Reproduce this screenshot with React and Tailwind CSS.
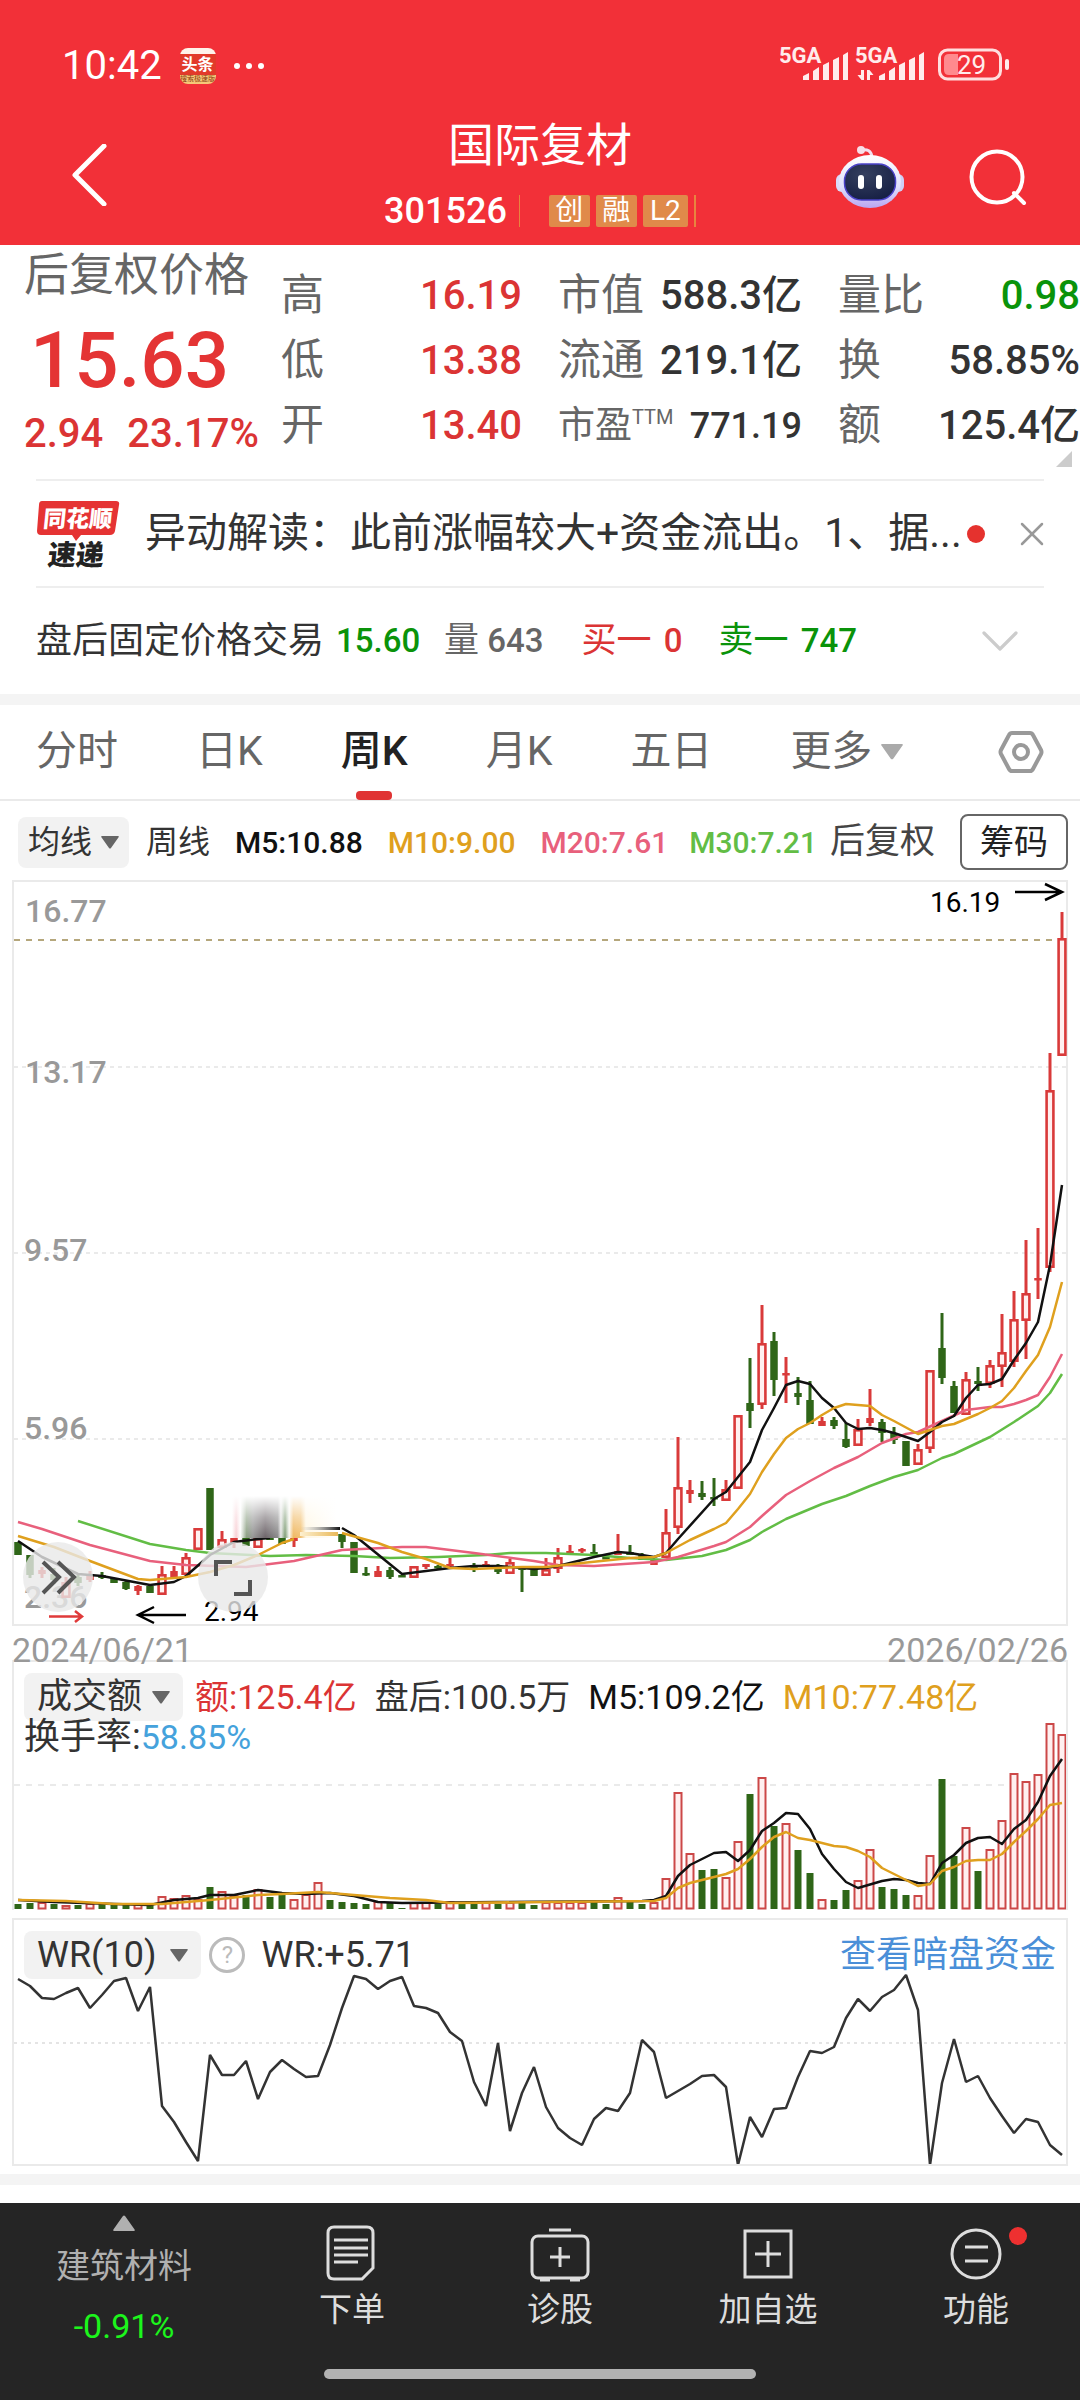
import { X, ChevronDown } from "lucide-react";

const RED = "#d93a3a";
const GREEN = "#2f6618";

// [up, high, bodyTop, bodyBottom, low, volumeTop]
const bars = [
  [0, 1542, 1542, 1555, 1555, 1904],
  [0, 1555, 1555, 1575, 1578, 1903],
  [1, 1567, 1570, 1574, 1578, 1903],
  [0, 1568, 1574, 1580, 1584, 1904],
  [1, 1577, 1582, 1598, 1598, 1906],
  [0, 1575, 1577, 1583, 1586, 1905],
  [1, 1571, 1575, 1580, 1582, 1904],
  [0, 1572, 1575, 1578, 1579, 1904],
  [0, 1578, 1578, 1583, 1583, 1905],
  [0, 1580, 1582, 1589, 1590, 1905],
  [1, 1585, 1586, 1591, 1595, 1905],
  [0, 1586, 1586, 1593, 1593, 1905],
  [1, 1566, 1574, 1595, 1595, 1897],
  [1, 1566, 1571, 1577, 1577, 1899],
  [1, 1553, 1557, 1575, 1575, 1896],
  [1, 1528, 1528, 1550, 1550, 1900],
  [0, 1488, 1488, 1550, 1550, 1887],
  [1, 1531, 1539, 1548, 1548, 1892],
  [1, 1536, 1538, 1543, 1548, 1896],
  [0, 1537, 1537, 1546, 1546, 1895],
  [1, 1536, 1538, 1548, 1548, 1890],
  [0, 1535, 1536, 1540, 1540, 1897],
  [0, 1538, 1538, 1544, 1544, 1895],
  [1, 1536, 1537, 1541, 1547, 1900],
  [1, 0, 0, 0, 0, 1895],
  [1, 0, 0, 0, 0, 1883],
  [0, 0, 0, 0, 0, 1900],
  [0, 1534, 1534, 1542, 1548, 1902],
  [0, 1542, 1542, 1573, 1573, 1903],
  [0, 1567, 1573, 1575, 1576, 1904],
  [1, 1566, 1571, 1577, 1577, 1902],
  [0, 1567, 1570, 1577, 1579, 1903],
  [0, 1575, 1575, 1577, 1577, 1908],
  [1, 1566, 1566, 1578, 1578, 1903],
  [1, 1564, 1564, 1567, 1569, 1903],
  [0, 1565, 1566, 1568, 1569, 1904],
  [1, 1558, 1564, 1566, 1567, 1902],
  [0, 1566, 1566, 1568, 1568, 1904],
  [0, 1563, 1566, 1569, 1572, 1904],
  [1, 1561, 1564, 1567, 1567, 1903],
  [0, 1564, 1567, 1572, 1574, 1904],
  [1, 1559, 1562, 1574, 1574, 1903],
  [0, 1567, 1567, 1570, 1592, 1903],
  [0, 1570, 1570, 1576, 1576, 1905],
  [1, 1558, 1569, 1576, 1576, 1903],
  [1, 1548, 1557, 1569, 1573, 1903],
  [1, 1545, 1551, 1553, 1553, 1903],
  [1, 1548, 1549, 1551, 1553, 1903],
  [0, 1544, 1552, 1554, 1554, 1902],
  [0, 1556, 1557, 1558, 1559, 1904],
  [1, 1534, 1551, 1555, 1555, 1898],
  [0, 1545, 1552, 1555, 1555, 1902],
  [0, 1553, 1555, 1560, 1560, 1904],
  [1, 1560, 1560, 1565, 1565, 1903],
  [1, 1509, 1532, 1558, 1558, 1879],
  [1, 1437, 1487, 1528, 1534, 1793],
  [1, 1480, 1490, 1494, 1503, 1854],
  [0, 1481, 1493, 1497, 1500, 1870],
  [0, 1478, 1497, 1498, 1506, 1869],
  [1, 1480, 1489, 1501, 1501, 1878],
  [1, 1415, 1415, 1489, 1489, 1842],
  [0, 1358, 1403, 1411, 1428, 1794],
  [1, 1305, 1343, 1405, 1409, 1778],
  [0, 1332, 1341, 1380, 1396, 1826],
  [1, 1357, 1373, 1375, 1403, 1824],
  [0, 1377, 1393, 1397, 1405, 1850],
  [0, 1381, 1400, 1424, 1424, 1873],
  [1, 1417, 1421, 1426, 1426, 1900],
  [0, 1417, 1420, 1426, 1429, 1900],
  [0, 1423, 1439, 1447, 1448, 1890],
  [1, 1419, 1429, 1446, 1446, 1881],
  [1, 1389, 1418, 1423, 1426, 1850],
  [0, 1419, 1422, 1433, 1442, 1887],
  [0, 1427, 1433, 1440, 1444, 1889],
  [0, 1441, 1441, 1466, 1466, 1895],
  [1, 1444, 1449, 1465, 1465, 1896],
  [1, 1370, 1370, 1449, 1453, 1856],
  [0, 1313, 1348, 1378, 1384, 1779],
  [0, 1381, 1386, 1413, 1413, 1856],
  [1, 1372, 1379, 1415, 1415, 1828],
  [0, 1367, 1381, 1384, 1391, 1871],
  [1, 1360, 1365, 1384, 1388, 1850],
  [1, 1314, 1352, 1367, 1387, 1821],
  [1, 1291, 1319, 1362, 1367, 1774],
  [1, 1240, 1293, 1321, 1359, 1782],
  [1, 1228, 1278, 1280, 1299, 1775],
  [1, 1053, 1090, 1268, 1272, 1724],
  [1, 912, 938, 1056, 1056, 1735],
];

// moving averages as flat lists: bar index, y
const priceLines = [
  {
    color: "#62bd45",
    data: [5, 1521, 11, 1544, 14, 1550, 16, 1553, 21, 1556, 24, 1555, 28, 1556, 31, 1558, 35, 1557, 39, 1555, 41, 1553, 44, 1553, 48, 1555, 51, 1558, 54, 1560, 57, 1556, 59, 1550, 61, 1540, 62, 1532, 64, 1519, 67, 1504, 69, 1496, 71, 1486, 73, 1477, 75, 1470, 77, 1458, 78, 1454, 81, 1437, 83, 1422, 85, 1406, 86, 1393, 87, 1374],
  },
  {
    color: "#e8607c",
    data: [0, 1522, 2, 1529, 6, 1545, 11, 1561, 14, 1565, 19, 1567, 23, 1561, 27, 1550, 32, 1547, 34, 1547, 38, 1553, 43, 1561, 45, 1565, 48, 1566, 53, 1562, 55, 1557, 58, 1546, 59, 1542, 61, 1527, 62, 1516, 64, 1495, 66, 1481, 68, 1468, 70, 1457, 72, 1443, 74, 1434, 75, 1432, 77, 1421, 79, 1410, 81, 1407, 82, 1407, 83, 1404, 84, 1400, 85, 1395, 86, 1377, 87, 1354],
  },
  {
    color: "#111111",
    data: [0, 1541, 2, 1557, 5, 1574, 7, 1576, 11, 1585, 13, 1582, 14, 1576, 16, 1555, 18, 1542, 20, 1539, 21, 1538],
  },
  {
    color: "#111111",
    data: [27, 1528, 28, 1535, 32, 1574, 36, 1568, 38, 1566, 40, 1566, 43, 1569, 44, 1568, 45, 1566, 46, 1563, 48, 1557, 50, 1552, 51, 1553, 53, 1557, 54, 1553, 55, 1539, 58, 1499, 59, 1492, 60, 1477, 61, 1462, 62, 1430, 63, 1408, 64, 1385, 65, 1381, 66, 1384, 67, 1398, 68, 1408, 69, 1423, 70, 1429, 71, 1428, 72, 1430, 73, 1433, 75, 1441, 76, 1432, 77, 1422, 78, 1416, 79, 1398, 80, 1385, 81, 1384, 82, 1379, 83, 1360, 84, 1343, 85, 1322, 86, 1265, 87, 1185],
  },
  {
    color: "#dfa01e",
    data: [0, 1536, 3, 1547, 6, 1561, 10, 1579, 11, 1580, 14, 1577, 16, 1572, 18, 1565, 20, 1555, 22, 1543, 23, 1539],
  },
  {
    color: "#dfa01e",
    data: [27, 1533, 30, 1543, 32, 1552, 34, 1559, 36, 1568, 38, 1569, 42, 1567, 44, 1567, 47, 1563, 51, 1558, 53, 1557, 54, 1553, 56, 1540, 58, 1529, 59, 1523, 60, 1509, 61, 1494, 62, 1472, 63, 1454, 64, 1438, 65, 1429, 66, 1423, 67, 1415, 68, 1408, 69, 1404, 71, 1406, 72, 1415, 73, 1421, 75, 1434, 77, 1426, 78, 1424, 80, 1414, 81, 1408, 82, 1401, 83, 1388, 84, 1371, 85, 1355, 86, 1327, 87, 1282],
  },
];

const volumeLines = [
  {
    color: "#111111",
    data: [0, 1900, 3, 1902, 8, 1904, 11, 1905, 13, 1900, 15, 1898, 16, 1895, 18, 1895, 20, 1890, 22, 1893, 24, 1894, 26, 1893, 28, 1896, 30, 1902, 32, 1903, 40, 1902, 52, 1901, 53, 1900, 54, 1896, 55, 1876, 56, 1865, 57, 1859, 58, 1853, 59, 1852, 60, 1861, 61, 1850, 62, 1831, 63, 1823, 64, 1813, 65, 1814, 66, 1829, 67, 1854, 68, 1869, 69, 1882, 70, 1888, 72, 1881, 73, 1879, 74, 1880, 75, 1883, 76, 1884, 77, 1863, 78, 1855, 79, 1843, 80, 1838, 81, 1837, 82, 1844, 83, 1829, 84, 1820, 85, 1802, 86, 1776, 87, 1759],
  },
  {
    color: "#dfa01e",
    data: [0, 1900, 4, 1901, 8, 1904, 12, 1904, 16, 1900, 20, 1895, 22, 1894, 25, 1892, 28, 1895, 31, 1898, 34, 1900, 36, 1903, 44, 1902, 53, 1901, 54, 1898, 55, 1888, 56, 1883, 58, 1877, 59, 1874, 60, 1869, 61, 1859, 62, 1847, 63, 1837, 64, 1832, 65, 1838, 66, 1840, 68, 1846, 69, 1847, 70, 1851, 71, 1857, 72, 1868, 75, 1886, 76, 1884, 77, 1871, 78, 1867, 79, 1861, 80, 1860, 81, 1860, 82, 1854, 83, 1842, 84, 1831, 85, 1819, 86, 1805, 87, 1803],
  },
];

// one y per bar
const wr = [
  1979, 1986, 1998, 1999, 1993, 1988, 2008, 1995, 1981, 1978, 2011, 1987, 2106, 2122, 2142, 2161, 2055, 2075, 2075, 2061, 2099, 2072,
  2060, 2069, 2077, 2076, 2045, 2008, 1976, 1979, 1989, 1981, 1977, 2006, 2008, 2013, 2032, 2041, 2082, 2106, 2043, 2131, 2093, 2067,
  2107, 2128, 2138, 2145, 2119, 2108, 2111, 2093, 2040, 2052, 2098, 2091, 2084, 2076, 2075, 2087, 2165, 2117, 2137, 2109, 2108, 2077,
  2051, 2053, 2047, 2018, 1999, 2011, 1997, 1990, 1975, 2010, 2165, 2083, 2039, 2082, 2076, 2098, 2116, 2133, 2119, 2122, 2145, 2155,
];

const barX = (i) => 18 + i * 12;

const toPoints = (data) => {
  const out = [];
  for (let i = 0; i < data.length; i += 2) out.push(`${barX(data[i])},${data[i + 1]}`);
  return out.join(" ");
};

const Lines = ({ lines }) =>
  lines.map((l, i) => (
    <polyline key={i} points={toPoints(l.data)} fill="none" stroke={l.color} strokeWidth="2.5" strokeLinejoin="round" />
  ));

const Candle = ({ i, bar }) => {
  const [up, high, top, bottom, low] = bar;
  const x = barX(i);
  if (!high) return null;
  if (!up || bottom - top < 7) {
    const color = up ? RED : GREEN;
    return (
      <g fill={color}>
        <rect x={x - 1.5} y={high} width="3" height={low - high} />
        <rect x={x - 3.75} y={top} width="7.5" height={Math.max(bottom - top, 2.5)} />
      </g>
    );
  }
  return (
    <g>
      <path d={`M${x} ${high}V${top}M${x} ${bottom}V${low}`} stroke={RED} strokeWidth="3" />
      <rect x={x - 3.4} y={top + 1.3} width="6.8" height={bottom - top - 2.6} fill="#fff0f0" stroke={RED} strokeWidth="2.6" />
    </g>
  );
};

const Caret = ({ className }) => (
  <svg viewBox="0 0 18 13" className={className} fill="currentColor" aria-hidden="true">
    <path d="M1 0h16q1.500 0 .6 1.200L10 12q-1 1-2 0L.4 1.200Q-.5 0 1 0z" />
  </svg>
);

const SignalBars = ({ x, arrows }) => (
  <g>
    <text x={x} y="32" fontSize="22" fontWeight="700">5GA</text>
    <path d={`M${x + 24} 49v-4l6-3v7zM${x + 34} 49v-9l6-4v13zM${x + 44} 49v-15l6-3v18zM${x + 54} 49v-20l6-3v23zM${x + 64} 49v-25l5-3v28z`} />
    {arrows && <path d={`M${x + 9} 39v10h-2.500l-4-5h3.500v-5zM${x + 12} 49v-10h2.500l4 5h-3.500v5z`} />}
  </g>
);

const Header = () => (
  <header className="bg-[#f23038] text-white h-[245px]">
    <div className="flex items-center h-[132px] pl-[62px] pr-[68px]">
      <span className="text-[40px] leading-none">10:42</span>
      <div className="flex flex-col items-center justify-between ml-[18px] size-9 rounded-lg overflow-hidden bg-[#e23a2a]">
        <span className="h-[6px] w-full bg-[#fff3ea]" />
        <span className="text-[16px] leading-[18px] font-bold">头条</span>
        <span className="w-full bg-[#f6c878] text-[#8a3a10] text-[7px] leading-[9px] text-center">搜索极速版</span>
      </div>
      <svg viewBox="0 0 32 8" className="w-8 h-2 ml-[17px]" fill="#fff" aria-hidden="true">
        <circle cx="4" cy="4" r="3" />
        <circle cx="16" cy="4" r="3" />
        <circle cx="28" cy="4" r="3" />
      </svg>
      <svg viewBox="780 5 232 60" className="w-[232px] h-[60px] ml-auto" fill="#ffecec" aria-label="信号与电量">
        <SignalBars x={779} />
        <SignalBars x={855} arrows />
        <rect x="939.500" y="19" width="61" height="29" rx="8" fill="none" stroke="#ffdede" strokeWidth="3" />
        <path d="M949 23h9v21h-9q-5 0-5-5v-11q0-5 5-5z" fill="#ff8a8e" />
        <rect x="1005" y="28" width="4" height="11" rx="2" />
        <text x="957" y="43" fontSize="26">29</text>
      </svg>
    </div>
    <div className="grid grid-cols-[1fr_auto_1fr] items-center h-[113px] px-[53px]">
      <button aria-label="返回" className="justify-self-start ml-[17px] -mt-7">
        <svg viewBox="0 0 38 62" className="w-[38px] h-[62px]" fill="none" stroke="#fff" strokeWidth="5">
          <path d="M34 2L5 31l29 29" strokeLinecap="round" strokeLinejoin="round" />
        </svg>
      </button>
      <div className="flex flex-col items-center -mt-8">
        <h1 className="text-[46px] leading-[52px]">国际复材</h1>
        <div className="flex items-center mt-6 leading-8">
          <span className="text-[36px] font-medium">301526</span>
          <span className="w-px h-8 ml-3 mr-[29px] bg-[#e8843f]" />
          <div className="flex gap-[6px] text-[28px]">
            <span className="w-[41px] h-8 text-center rounded-xs bg-[#e08a4a]">创</span>
            <span className="w-[41px] h-8 text-center rounded-xs bg-[#e08a4a]">融</span>
            <span className="w-[45px] h-8 text-center rounded-xs bg-[#e08a4a]">L2</span>
          </div>
          <span className="w-[2px] h-8 ml-[6px] bg-[#e8843f]" />
        </div>
      </div>
      <div className="flex items-center gap-[63px] justify-self-end -mt-6">
        <button aria-label="智能助手">
          <svg viewBox="0 0 68 64" className="w-[68px] h-16">
            <defs>
              <linearGradient id="shell" x1="0" y1="0" x2="0" y2="1">
                <stop offset="0" stopColor="#ffffff" />
                <stop offset="0.600" stopColor="#dfe0fb" />
                <stop offset="1" stopColor="#b9a6f2" />
              </linearGradient>
              <radialGradient id="face" cx="0.400" cy="0.300" r="0.800">
                <stop offset="0" stopColor="#35405f" />
                <stop offset="1" stopColor="#141d42" />
              </radialGradient>
            </defs>
            <path d="M25 5q10-2 11 7" fill="none" stroke="#f3dfef" strokeWidth="3" />
            <circle cx="25" cy="5" r="4" fill="#f7dfe8" />
            <rect x="0" y="29" width="12" height="18" rx="6" fill="#d9dcfa" />
            <rect x="56" y="29" width="12" height="18" rx="6" fill="#cfcff6" />
            <ellipse cx="34" cy="36.500" rx="31" ry="26.500" fill="url(#shell)" />
            <rect x="8.500" y="19" width="51" height="36" rx="17" fill="url(#face)" stroke="#4a42c8" strokeWidth="1.500" />
            <rect x="22" y="30" width="6" height="14" rx="3" fill="#fff" />
            <rect x="40" y="30" width="6" height="14" rx="3" fill="#fff" />
          </svg>
        </button>
        <button aria-label="搜索">
          <svg viewBox="0 0 60 60" className="size-[60px]" fill="none" stroke="#fff" strokeWidth="4">
            <circle cx="30" cy="30" r="25.500" />
            <path d="M47 46l10 10" strokeLinecap="round" />
          </svg>
        </button>
      </div>
    </div>
  </header>
);

const Stat = ({ label, value, color = "text-[#333]" }) => (
  <div className="flex items-center justify-between h-[65px] whitespace-nowrap">
    <dt className="text-[43px] text-[#666]">{label}</dt>
    <dd className={`text-[40px] font-medium ${color}`}>{value}</dd>
  </div>
);

const Quote = () => (
  <section className="relative h-[234px] pl-6">
    <dl className="grid grid-cols-[minmax(0,221fr)_241fr_244fr_242fr] gap-x-9 leading-none">
      <div className="whitespace-nowrap text-[#db3434]">
        <dt className="flex items-center h-[60px] text-[45px] text-[#666]">后复权价格</dt>
        <dd className="flex items-center h-[112px] pl-[6px] text-[78px] font-medium text-[#e43434]">15.63</dd>
        <dd className="flex items-center gap-6 h-[34px] text-[40px] font-medium">
          <span>2.94</span>
          <span>23.17%</span>
        </dd>
      </div>
      <div className="pt-[18px]">
        <Stat label="高" value="16.19" color="text-[#db3434]" />
        <Stat label="低" value="13.38" color="text-[#db3434]" />
        <Stat label="开" value="13.40" color="text-[#db3434]" />
      </div>
      <div className="pt-[18px]">
        <Stat label="市值" value="588.3亿" />
        <Stat label="流通" value="219.1亿" />
        <div className="flex items-center justify-between h-[65px] whitespace-nowrap">
          <dt className="flex items-start text-[37px] text-[#666]">
            市盈<span className="text-[20px]">TTM</span>
          </dt>
          <dd className="text-[36px] font-medium text-[#333]">771.19</dd>
        </div>
      </div>
      <div className="pt-[18px]">
        <Stat label="量比" value="0.98" color="text-[#0a930a]" />
        <Stat label="换" value="58.85%" />
        <Stat label="额" value="125.4亿" />
      </div>
    </dl>
    <svg viewBox="0 0 16 16" className="absolute right-2 bottom-3 size-4" aria-hidden="true">
      <path d="M16 0v16H0z" fill="#ccc" />
    </svg>
  </section>
);

const News = () => (
  <section className="flex items-center h-[109px] mx-9 border-y-2 border-[#eee]">
    <svg viewBox="0 0 84 70" className="w-[84px] h-[70px] shrink-0 overflow-visible" aria-label="同花顺速递">
      <path d="M6 2h74q4 0 3 4l-4 26q-1 4-5 4H45l-5 6-4-6H5q-4 0-4-4L3 6q0-4 3-4z" fill="#e53333" />
      <g fontWeight="900" textAnchor="middle" transform="skewX(-6)">
        <text x="44" y="28" fontSize="23" fill="#fff">同花顺</text>
        <text x="46" y="66" fontSize="28" fill="#222">速递</text>
      </g>
    </svg>
    <a href="#news" className="ml-[25px] text-[41px] text-[#333] whitespace-nowrap">
      异动解读：此前涨幅较大+资金流出。1、据...
    </a>
    <span className="ml-[5px] size-[18px] shrink-0 rounded-full bg-[#e5322e]" />
    <button aria-label="关闭" className="ml-auto -mr-2 text-[#999]">
      <X className="size-10" strokeWidth={1.5} />
    </button>
  </section>
);

const AfterHours = () => (
  <section className="flex items-center h-[106px] px-9 text-[33px] whitespace-nowrap">
    <span className="text-[36px] text-[#333]">盘后固定价格交易</span>
    <span className="ml-3 w-[80px] font-medium text-[#0a930a]">15.60</span>
    <span className="ml-7 text-[#666]">
      <span className="text-[35px]">量</span> <span className="font-medium">643</span>
    </span>
    <span className="ml-[38px] text-[#db3434]">
      <span className="text-[35px]">买一</span> <span className="ml-1 font-medium">0</span>
    </span>
    <span className="ml-9 text-[#0a930a]">
      <span className="text-[35px]">卖一</span> <span className="ml-1 font-medium">747</span>
    </span>
    <button aria-label="展开" className="ml-auto mr-3 text-[#ccc]">
      <ChevronDown className="size-16" strokeWidth={1.2} />
    </button>
  </section>
);

const tabs = ["分时", "日K", "周K", "月K", "五日"];

const Tabs = () => (
  <nav className="flex items-center gap-[78px] h-24 px-9 text-[41px] text-[#666] whitespace-nowrap border-b-2 border-[#eaeaea]">
    {tabs.map((t) =>
      t === "周K" ? (
        <button key={t} className="relative h-24 font-medium text-[#222]">
          {t}
          <span className="absolute bottom-0 left-1/2 w-9 h-[9px] -translate-x-1/2 rounded-sm bg-[#e03434]" />
        </button>
      ) : (
        <button key={t}>{t}</button>
      )
    )}
    <button className="flex items-center gap-[9px]">
      更多
      <Caret className="w-[22px] h-[18px] text-[#aaa]" />
    </button>
    <button aria-label="设置" className="ml-auto">
      <svg viewBox="0 0 46 44" className="w-[46px] h-11" fill="none" stroke="#999" strokeWidth="4">
        <path d="M14 3h18q2 0 3 2l8 15q1 2 0 4l-8 15q-1 2-3 2H14q-2 0-3-2L3 24q-1-2 0-4l8-15q1-2 3-2z" />
        <circle cx="23" cy="22" r="7" />
      </svg>
    </button>
  </nav>
);

const Averages = () => (
  <div className="flex items-center justify-between h-[79px] pt-[3px] pl-[18px] pr-3 text-[30px] font-medium whitespace-nowrap">
    <button className="flex items-center gap-[9px] h-[51px] px-[10px] rounded-lg bg-[#f2f2f2] text-[32px] font-normal text-[#333]">
      均线
      <Caret className="w-[18px] h-[13px] text-[#666]" />
    </button>
    <span className="ml-1 text-[32px] font-normal text-[#333]">周线</span>
    <span className="ml-3 text-[#111]">M5:10.88</span>
    <span className="ml-3 text-[#dfa01e]">M10:9.00</span>
    <span className="ml-3 text-[#e8607c]">M20:7.61</span>
    <span className="ml-2 text-[#62bd45]">M30:7.21</span>
    <span className="text-[35px] font-normal text-[#444]">后复权</span>
    <button className="ml-3 w-[108px] h-[56px] rounded-lg border-2 border-[#666] text-[34px] font-normal text-[#222]">筹码</button>
  </div>
);

const PriceChart = () => (
  <div className="relative border-2 border-[#eaeaea]">
    <svg viewBox="14 882 1052 742" className="block w-full overflow-visible" aria-label="周K线">
      <defs>
        <linearGradient id="fade" x1="0" y1="0" x2="0" y2="1">
          <stop offset="0" stopColor="#fff" stopOpacity="1" />
          <stop offset="0.500" stopColor="#fff" stopOpacity="0.500" />
          <stop offset="1" stopColor="#fff" stopOpacity="0.100" />
        </linearGradient>
        <linearGradient id="smear" x1="0" y1="0" x2="1" y2="0">
          <stop offset="0" stopColor="#fff" />
          <stop offset="0.040" stopColor="#f7c9cf" />
          <stop offset="0.080" stopColor="#fff" />
          <stop offset="0.140" stopColor="#7d9474" />
          <stop offset="0.200" stopColor="#8a8a8a" />
          <stop offset="0.320" stopColor="#5c5258" />
          <stop offset="0.440" stopColor="#7c7c7c" />
          <stop offset="0.470" stopColor="#e4e4e4" />
          <stop offset="0.510" stopColor="#6d8f62" />
          <stop offset="0.550" stopColor="#f8f8f4" />
          <stop offset="0.590" stopColor="#eeb050" />
          <stop offset="0.660" stopColor="#f0b85e" />
          <stop offset="0.710" stopColor="#fff6e0" />
          <stop offset="1" stopColor="#fff" />
        </linearGradient>
        <linearGradient id="tail" x1="0" y1="0" x2="1" y2="0">
          <stop offset="0" stopColor="#aaa" stopOpacity="0" />
          <stop offset="1" stopColor="#111" />
        </linearGradient>
        <linearGradient id="glow" x1="0" y1="0" x2="1" y2="0">
          <stop offset="0" stopColor="#fdf0d0" />
          <stop offset="1" stopColor="#e9b95a" />
        </linearGradient>
      </defs>
      <g stroke="#e4e4e4" strokeWidth="1.500" strokeDasharray="4 4">
        <path d="M14 1067H1066M14 1253H1066M14 1439H1066" />
      </g>
      <path d="M14 940H1066" stroke="#b5a77c" strokeWidth="2" strokeDasharray="6 6" />
      <g fontSize="32" fontWeight="500" fill="#999">
        <text x="25" y="922">16.77</text>
        <text x="25" y="1083">13.17</text>
        <text x="24" y="1261">9.57</text>
        <text x="24" y="1439">5.96</text>
        <text x="24" y="1608">2.36</text>
      </g>
      {bars.map((b, i) => (
        <Candle key={i} i={i} bar={b} />
      ))}
      <Lines lines={priceLines} />
      <rect x="232" y="1496" width="104" height="42" fill="url(#smear)" />
      <rect x="232" y="1496" width="104" height="42" fill="url(#fade)" />
      <rect x="300" y="1532" width="38" height="4" fill="url(#glow)" />
      <rect x="300" y="1527" width="40" height="3" fill="url(#tail)" />
      <g fontSize="28" fill="#000">
        <text x="930" y="912">16.19</text>
        <text x="204" y="1621">2.94</text>
      </g>
      <g fill="none" stroke="#000" strokeWidth="2.500">
        <path d="M1015 892h46M1045 884l17 8-17 8" />
        <path d="M186 1615h-47M154 1607l-16 8 16 8" />
      </g>
      <path d="M49 1616.500h33M75 1611l7 5.500-7 5.500" fill="none" stroke="#e03a3a" strokeWidth="2.500" />
    </svg>
    <button aria-label="快进" className="absolute left-[9px] bottom-3 size-[70px] rounded-full bg-[#e8e8e8]/80">
      <svg viewBox="0 0 70 70" fill="none" stroke="#555" strokeWidth="4">
        <path d="M20 20l16 15-16 16M35 20l16 15-16 16" />
      </svg>
    </button>
    <button aria-label="全屏" className="absolute left-[184px] bottom-3 size-[70px] rounded-full bg-[#e8e8e8]/80">
      <svg viewBox="0 0 70 70" fill="none" stroke="#555" strokeWidth="4">
        <path d="M18 34V20h16M52 38v14H36" />
      </svg>
    </button>
  </div>
);

const VolumeChart = () => (
  <div className="grid border-2 border-b-0 border-[#eaeaea]">
    <svg viewBox="14 1662 1052 248" className="block w-full [grid-area:1/1]" aria-label="成交额">
      <path d="M14 1785H1066" stroke="#e4e4e4" strokeWidth="1.500" strokeDasharray="6 6" />
      {bars.map(([up, , , , , top], i) =>
        up ? (
          <rect key={i} x={barX(i) - 3.5} y={top} width="7" height={1908.500 - top} fill="#fff0f0" stroke="#cc4848" strokeWidth="2" />
        ) : (
          <rect key={i} x={barX(i) - 3.5} y={top} width="7" height={1909 - top} fill={GREEN} />
        )
      )}
      <Lines lines={volumeLines} />
    </svg>
    <div className="[grid-area:1/1] pt-[11px] pl-[10px] text-[34px] text-[#333] whitespace-nowrap">
      <div className="flex items-center gap-[18px] h-12">
        <button className="flex items-center gap-[10px] h-12 mr-[-6px] px-[13px] rounded-lg bg-[#f2f2f2] text-[35px]">
          成交额
          <Caret className="w-[18px] h-[13px] text-[#666]" />
        </button>
        <span className="text-[#db3434]">额:125.4亿</span>
        <span>盘后:100.5万</span>
        <span className="text-[#111]">M5:109.2亿</span>
        <span className="text-[#dfa01e]">M10:77.48亿</span>
      </div>
      <div className="leading-8 text-[36px]">
        换手率:<span className="text-[34px] text-[#45a2dc]">58.85%</span>
      </div>
    </div>
  </div>
);

const WrChart = () => (
  <div className="grid mt-2 border-2 border-[#eaeaea]">
    <svg viewBox="14 1920 1052 244" className="block w-full [grid-area:1/1]" aria-label="WR">
      <path d="M14 2043H1066" stroke="#e4e4e4" strokeWidth="2" strokeDasharray="3 4" />
    </svg>
    <div className="[grid-area:1/1] flex items-center h-12 mt-[11px] pl-[10px] pr-[10px] text-[36px] text-[#333] whitespace-nowrap">
      <button className="flex items-center gap-[14px] h-12 px-[13px] rounded-lg bg-[#f2f2f2]">
        WR(10)
        <Caret className="w-[18px] h-[13px] text-[#666]" />
      </button>
      <button aria-label="说明" className="flex items-center justify-center ml-2 size-9 rounded-full border-3 border-[#bbb] text-[24px] text-[#bbb]">
        ?
      </button>
      <span className="ml-4">WR:+5.71</span>
      <a href="#funds" className="ml-auto text-[#4a8fd8]">查看暗盘资金</a>
    </div>
    <svg viewBox="14 1920 1052 244" className="block w-full [grid-area:1/1] pointer-events-none" aria-hidden="true">
      <polyline points={wr.map((y, i) => `${barX(i)},${y}`).join(" ")} fill="none" stroke="#333" strokeWidth="2.500" strokeLinejoin="bevel" />
    </svg>
  </div>
);

const actions = [
  {
    label: "下单",
    icon: (
      <>
        <path d="M12 4h33q6 0 6 6v35l-11 11H12q-6 0-6-6V10q0-6 6-6z" />
        <path d="M12 17h34M12 25h34M12 32h34M12 39h24" />
      </>
    ),
  },
  {
    label: "诊股",
    icon: (
      <>
        <rect x="2" y="13" width="56" height="42" rx="6" />
        <path d="M19 7h22M30 24v20M20 34h20M10 57h10M40 57h10" />
      </>
    ),
  },
  {
    label: "加自选",
    icon: (
      <>
        <rect x="7" y="8" width="46" height="46" />
        <path d="M30 18v26M17 31h26" />
      </>
    ),
  },
  {
    label: "功能",
    dot: true,
    icon: (
      <>
        <circle cx="30" cy="31" r="24" />
        <path d="M19 24h23M19 38h23" />
      </>
    ),
  },
];

const BottomBar = () => (
  <footer className="h-[197px] bg-[#252525] text-[#ddd]">
    <div className="grid grid-cols-[248fr_208fr_208fr_208fr_208fr] h-[166px]">
      <a href="#sector" className="flex flex-col items-center pt-3 text-[#b0b0b0]">
        <Caret className="w-[26px] h-4 rotate-180" />
        <span className="mt-3 text-[34px] leading-[46px]">建筑材料</span>
        <span className="mt-4 text-[34px] leading-[42px] text-[#1cf51c]">-0.91%</span>
      </a>
      {actions.map((a) => (
        <button key={a.label} className="relative flex flex-col items-center pt-5 text-[33px] leading-[46px]">
          <svg viewBox="0 0 60 62" className="w-[60px] h-[62px] mb-[2px]" fill="none" stroke="currentColor" strokeWidth="3">
            {a.icon}
          </svg>
          {a.label}
          {a.dot && <span className="absolute top-6 right-[53px] size-[18px] rounded-full bg-[#ee3030]" />}
        </button>
      ))}
    </div>
    <div className="w-2/5 h-[10px] mx-auto rounded-full bg-[#b2b2b2]" />
  </footer>
);

const App = () => (
  <div className="bg-white overflow-x-hidden font-['Roboto','Noto_Sans_CJK_SC',sans-serif]">
    <Header />
    <main>
      <Quote />
      <News />
      <AfterHours />
      <div className="h-[11px] bg-[#f4f4f4]" />
      <Tabs />
      <Averages />
      <div className="mx-3">
        <PriceChart />
        <div className="flex justify-between h-[34px] text-[34px] leading-[48px] text-[#999]">
          <span>2024/06/21</span>
          <span>2026/02/26</span>
        </div>
        <VolumeChart />
        <WrChart />
      </div>
      <div className="h-[11px] mt-2 mb-[18px] bg-[#f4f4f4]" />
    </main>
    <BottomBar />
  </div>
);

export default App;
